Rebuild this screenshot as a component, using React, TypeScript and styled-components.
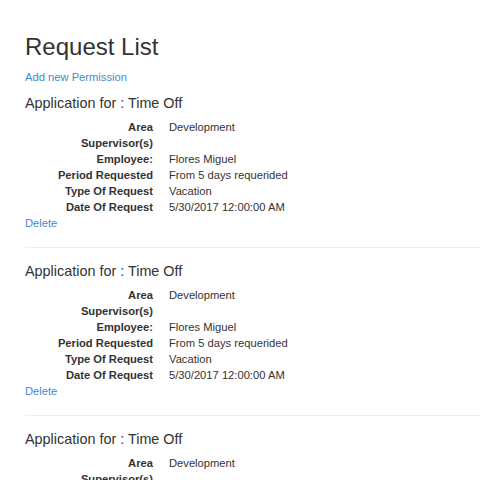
import React from 'react';
import styled, { createGlobalStyle } from 'styled-components';

// ============= 資料 =============

interface RequestItem {
  area: string;
  supervisors: string;
  employee: string;
  period: string;
  type: string;
  date: string;
}

const requests: RequestItem[] = [
  {
    area: 'Development',
    supervisors: '',
    employee: 'Flores Miguel',
    period: 'From 5 days requerided',
    type: 'Vacation',
    date: '5/30/2017 12:00:00 AM',
  },
  {
    area: 'Development',
    supervisors: '',
    employee: 'Flores Miguel',
    period: 'From 5 days requerided',
    type: 'Vacation',
    date: '5/30/2017 12:00:00 AM',
  },
  {
    area: 'Development',
    supervisors: '',
    employee: 'Flores Miguel',
    period: 'From 5 days requerided',
    type: 'Vacation',
    date: '5/30/2017 12:00:00 AM',
  },
];

// ============= 樣式定義 =============

const GlobalStyle = createGlobalStyle`
  html, body {
    margin: 0;
    padding: 0;
    background: #fff;
    overflow: hidden;
  }
  body {
    font-family: "Liberation Sans", Arial, Helvetica, sans-serif;
    font-size: 11.2px;
    line-height: 16px;
    color: #333;
  }
`;

const Page = styled.div`
  padding-left: 25px;
`;

const Title = styled.h2`
  margin: 34px 0 9px;
  font-size: 24px;
  font-weight: 500;
  line-height: 26px;
  color: #333;
`;

const Paragraph = styled.p`
  margin: 0 0 10px;
`;

const Link = styled.a`
  color: #428bca;
  text-decoration: none;
  cursor: pointer;
`;

const Section = styled.div``;

const SectionTitle = styled.h4`
  margin: 0 0 8px;
  font-size: 14.4px;
  font-weight: 500;
  line-height: 16px;
  color: #333;
`;

const DetailList = styled.dl`
  display: grid;
  grid-template-columns: 128px 1fr;
  column-gap: 16px;
  margin: 0;
`;

const Term = styled.dt`
  font-weight: 700;
  text-align: right;
  white-space: nowrap;
  min-height: 16px;
`;

const Value = styled.dd`
  margin: 0;
  min-height: 16px;
  white-space: nowrap;
`;

const Divider = styled.hr`
  margin: 16px 0 15px;
  border: 0;
  border-top: 1px solid #eee;
`;

// ============= 組件實現 =============

const RequestCard: React.FC<{ item: RequestItem }> = ({ item }) => (
  <Section>
    <SectionTitle>Application for : Time Off</SectionTitle>
    <DetailList>
      <Term>Area</Term>
      <Value>{item.area}</Value>
      <Term>Supervisor(s)</Term>
      <Value>{item.supervisors}</Value>
      <Term>Employee:</Term>
      <Value>{item.employee}</Value>
      <Term>Period Requested</Term>
      <Value>{item.period}</Value>
      <Term>Type Of Request</Term>
      <Value>{item.type}</Value>
      <Term>Date Of Request</Term>
      <Value>{item.date}</Value>
    </DetailList>
    <Link>Delete</Link>
    <Divider />
  </Section>
);

export default function App() {
  return (
    <>
      <GlobalStyle />
      <Page>
        <Title>Request List</Title>
        <Paragraph>
          <Link>Add new Permission</Link>
        </Paragraph>
        {requests.map((item, i) => (
          <RequestCard key={i} item={item} />
        ))}
      </Page>
    </>
  );
}
